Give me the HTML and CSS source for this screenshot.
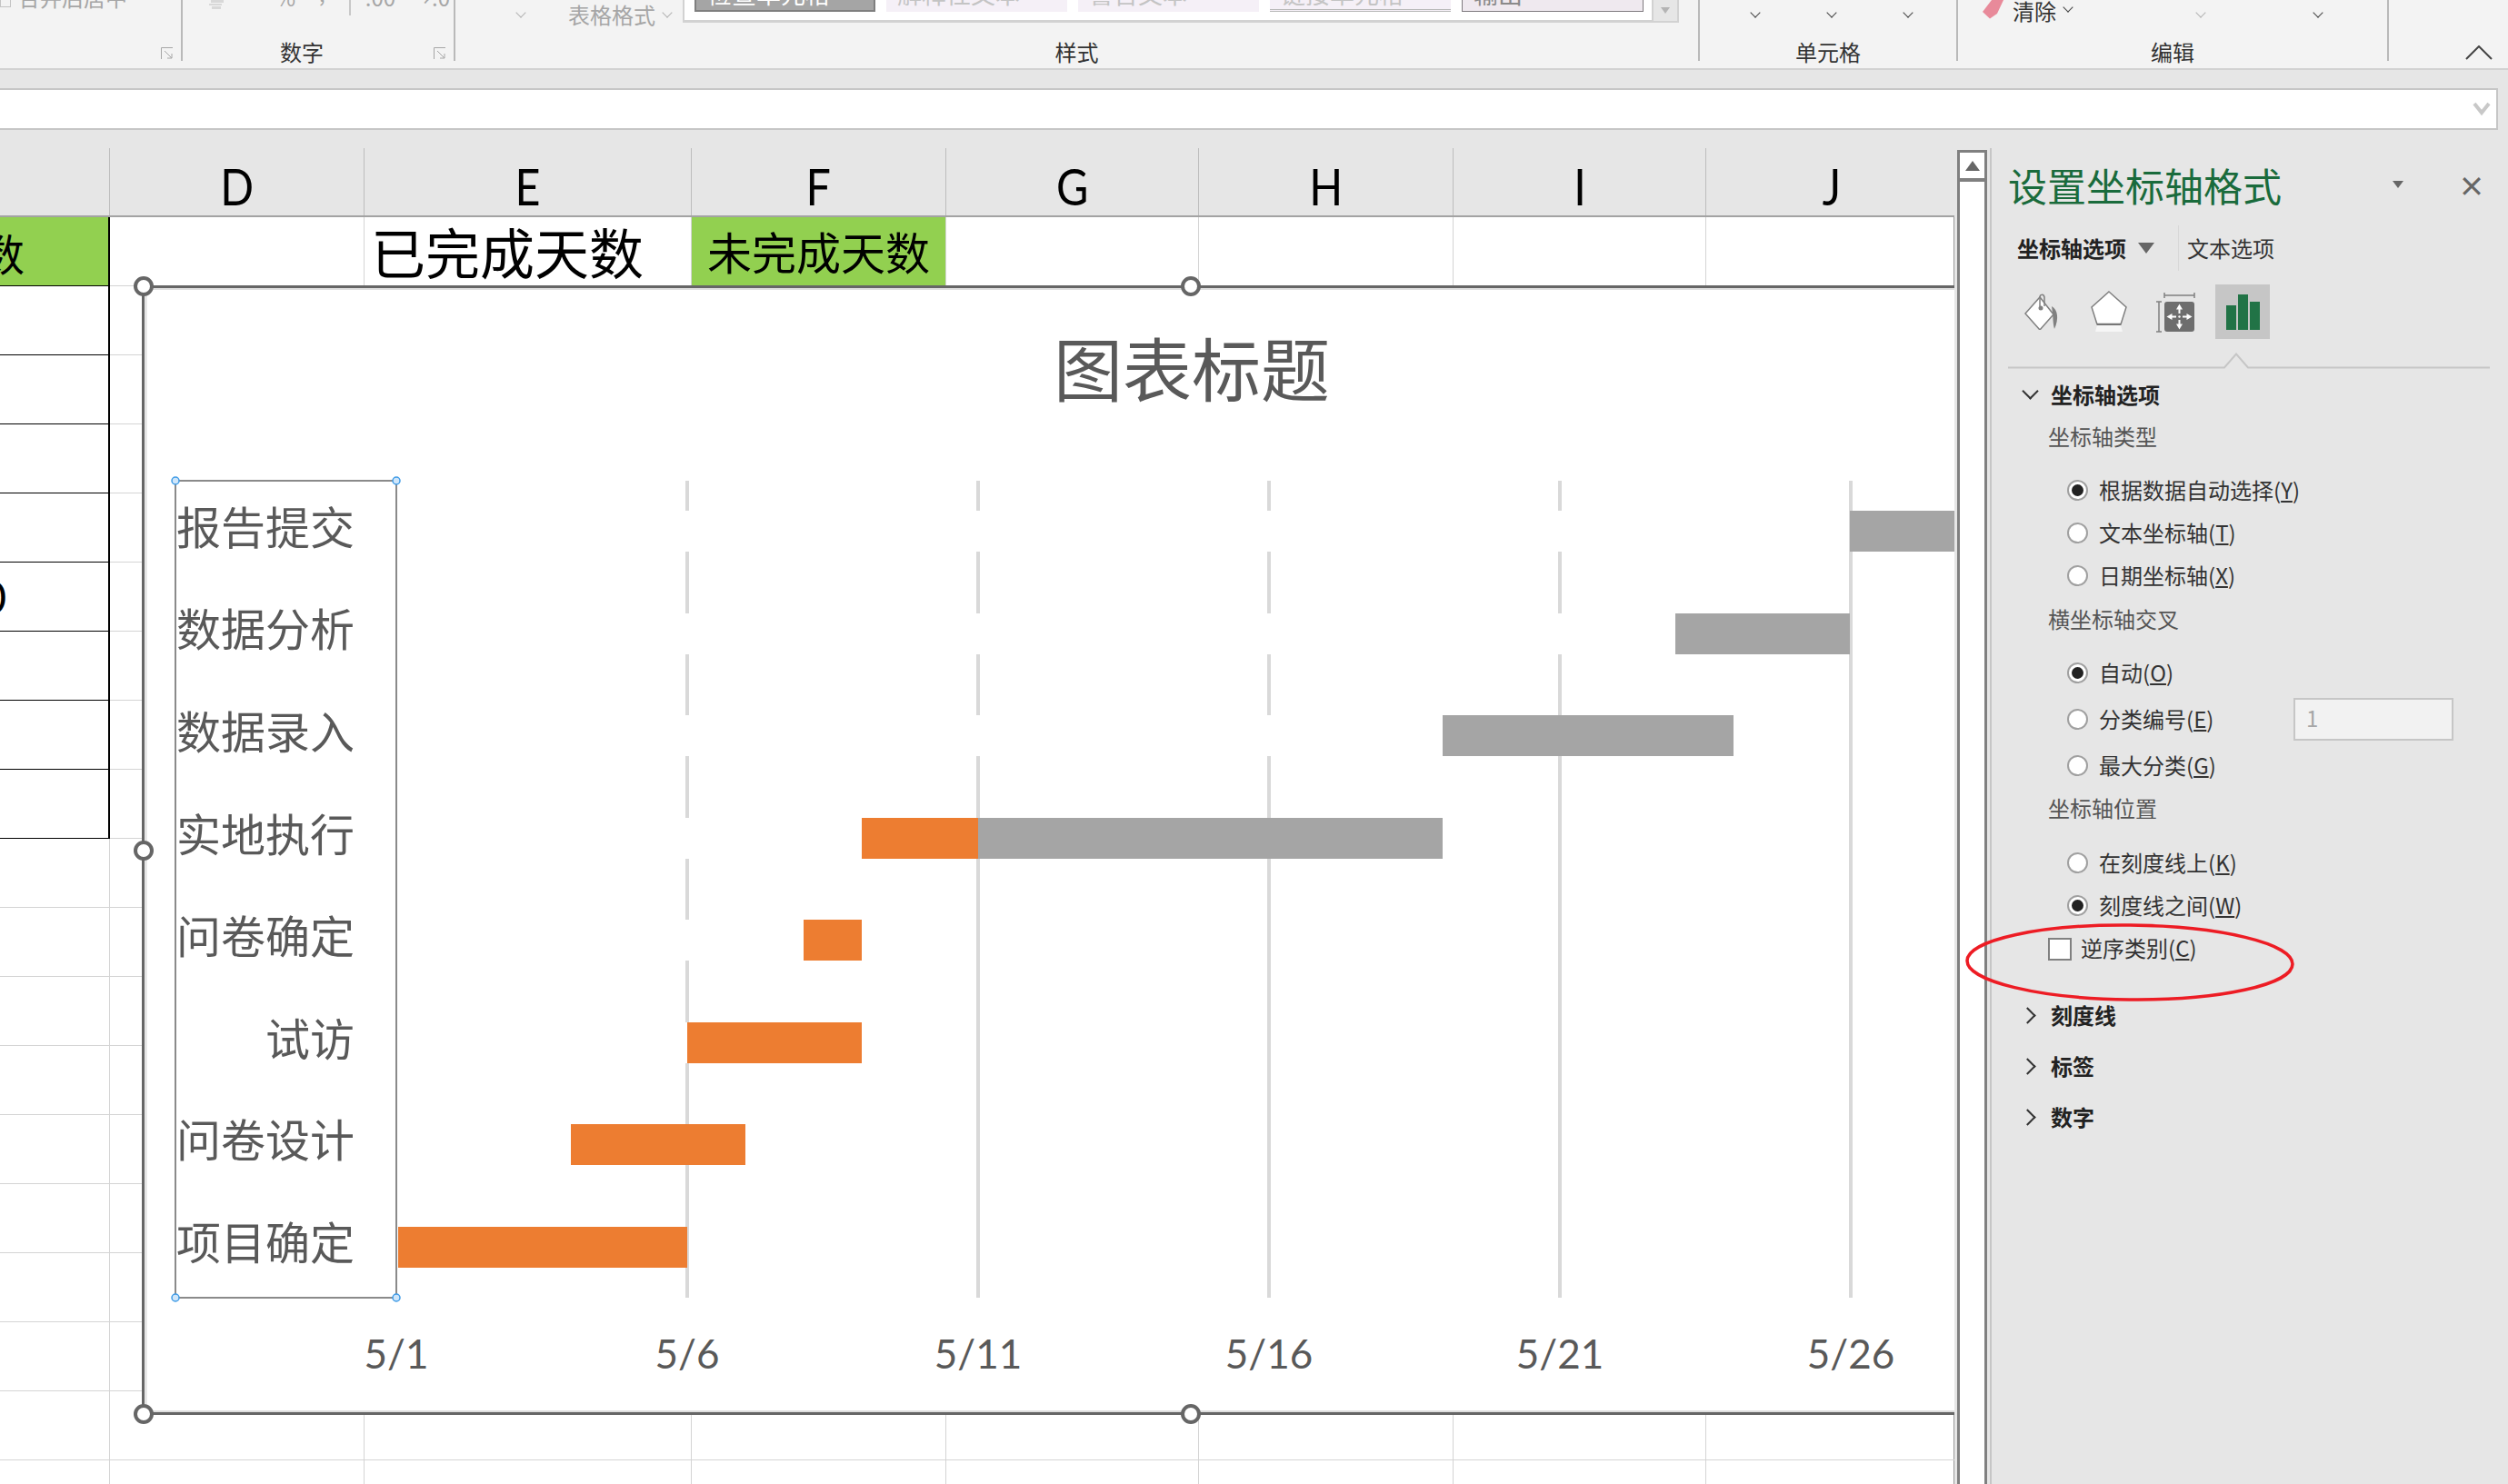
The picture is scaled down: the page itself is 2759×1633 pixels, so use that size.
FILE: index.html
```html
<!DOCTYPE html>
<html lang="zh-CN">
<head>
<meta charset="utf-8">
<title>设置坐标轴格式</title>
<link rel="stylesheet" href="styles.css">
</head>
<body>
<div class="app">
  <header class="ribbon">
    <section class="group g-align">
      <div class="group-top"><i class="merge-icon"></i><span class="clip-text gray merge">合并后居中</span></div>
      <svg class="launcher" viewBox="0 0 14 14"><path d="M.5 13V.5H13M4 4l8 8M12 7v5H7" fill="none" stroke="#a6a6a6"/></svg>
    </section>
    <section class="group g-number">
      <div class="group-top">
        <svg class="coins" width="24" height="10" viewBox="0 0 24 10"><path d="M3 0h14v3H3zM1 4h14v2H1zM4 7h10v3H4z" fill="#d8d8d8"/></svg>
        <span class="clip-text gray pct">%</span>
        <span class="clip-text gray comma">,</span>
        <span class="num-divider"></span>
        <span class="clip-text gray dec">.00</span>
        <span class="clip-text gray dec2">→.0</span>
      </div>
      <div class="group-label number-label">数字</div>
      <svg class="launcher" viewBox="0 0 14 14"><path d="M.5 13V.5H13M4 4l8 8M12 7v5H7" fill="none" stroke="#a6a6a6"/></svg>
    </section>
    <section class="group g-styles">
      <div class="group-top">
        <i class="chev faint s1"></i>
        <span class="table-format">表格格式</span>
        <i class="chev faint s2"></i>
        <div class="gallery">
          <span class="style-cell check"><span class="cut">检查单元格</span></span>
          <span class="style-cell soft"><span class="cut">解释性文本</span></span>
          <span class="style-cell soft"><span class="cut">警告文本</span></span>
          <span class="style-cell soft link"><span class="cut">链接单元格</span></span>
          <span class="style-cell output"><span class="cut">输出</span></span>
        </div>
        <div class="gallery-scroll"><i class="tri-down"></i></div>
      </div>
      <div class="group-label">样式</div>
    </section>
    <section class="group g-cells">
      <div class="group-top"><i class="chev c1"></i><i class="chev c2"></i><i class="chev c2"></i></div>
      <div class="group-label">单元格</div>
    </section>
    <section class="group g-edit">
      <div class="group-top">
        <svg class="eraser" width="24" height="21" viewBox="0 0 24 21"><path d="M23 0L16 15 8 20.500 0 13 10 0z" fill="#e88a9a"/></svg>
        <span class="clear">清除</span>
        <i class="chev e1"></i>
        <i class="chev faint e2"></i>
        <i class="chev e3"></i>
      </div>
      <div class="group-label">编辑</div>
    </section>
    <div class="collapse">
      <svg width="30" height="16" viewBox="0 0 30 16"><path d="M1 15L15 1l14 14" fill="none" stroke="#444" stroke-width="2"/></svg>
    </div>
  </header>

  <div class="formula-band">
    <div class="formula-input">
      <svg width="20" height="16" viewBox="0 0 20 16"><path d="M2 2l8 10 8-10" fill="none" stroke="#c8c8c8" stroke-width="4"/></svg>
    </div>
  </div>

  <main class="main">
    <div class="sheet">
      <div class="cols col-heads">
        <div class="head"></div>
        <div class="head"><span>D</span></div>
        <div class="head"><span>E</span></div>
        <div class="head"><span>F</span></div>
        <div class="head"><span>G</span></div>
        <div class="head"><span>H</span></div>
        <div class="head"><span>I</span></div>
        <div class="head"><span>J</span></div>
      </div>
      <div class="cols sheet-body">
        <div class="col">
          <div class="cell boxed green clipped">总天数</div>
          <div class="cell boxed"></div>
          <div class="cell boxed"></div>
          <div class="cell boxed"></div>
          <div class="cell boxed"></div>
          <div class="cell boxed clipped zero">0</div>
          <div class="cell boxed"></div>
          <div class="cell boxed"></div>
          <div class="cell boxed"></div>
        </div>
        <div class="col"></div>
        <div class="col"><div class="cell done">已完成天数</div></div>
        <div class="col"><div class="cell green todo">未完成天数</div></div>
        <div class="col"></div>
        <div class="col"></div>
        <div class="col"></div>
        <div class="col"></div>
      </div>

      <svg class="chart" width="2010" height="1270" viewBox="140 300 2010 1270">
        <rect x="157.500" y="315.500" width="2400" height="1240" fill="#fff" stroke="#666" stroke-width="3"/>
        <rect x="160.500" y="318" width="2400" height="1235" fill="none" stroke="#dedede" stroke-width="2"/>
        <text class="chart-title" x="1311" y="436" text-anchor="middle">图表标题</text>

        <g class="gridlines">
          <line x1="756" y1="529" x2="756" y2="1428"/>
          <line x1="1076" y1="529" x2="1076" y2="1428"/>
          <line x1="1396" y1="529" x2="1396" y2="1428"/>
          <line x1="1716" y1="529" x2="1716" y2="1428"/>
          <line x1="2036" y1="529" x2="2036" y2="1428"/>
        </g>

        <g fill="#fff">
          <rect x="436" y="562" width="1598" height="45"/>
          <rect x="436" y="675" width="1407" height="45"/>
          <rect x="436" y="787" width="1151" height="45"/>
          <rect x="436" y="900" width="512" height="45"/>
          <rect x="436" y="1012" width="448" height="45"/>
          <rect x="436" y="1125" width="320" height="45"/>
          <rect x="436" y="1237" width="192" height="45"/>
        </g>
        <g fill="#ed7d31">
          <rect x="948" y="900" width="128" height="45"/>
          <rect x="884" y="1012" width="64" height="45"/>
          <rect x="756" y="1125" width="192" height="45"/>
          <rect x="628" y="1237" width="192" height="45"/>
          <rect x="438" y="1350" width="318" height="45"/>
        </g>
        <g fill="#a5a5a5">
          <rect x="2035" y="562" width="128" height="45"/>
          <rect x="1843" y="675" width="192" height="45"/>
          <rect x="1587" y="787" width="320" height="45"/>
          <rect x="1076" y="900" width="511" height="45"/>
        </g>

        <rect x="193" y="529" width="243" height="899" fill="none" stroke="#8a8a8a" stroke-width="2"/>
        <g class="cat-labels" text-anchor="end">
          <text x="390" y="599">报告提交</text>
          <text x="390" y="711">数据分析</text>
          <text x="390" y="824">数据录入</text>
          <text x="390" y="937">实地执行</text>
          <text x="390" y="1049">问卷确定</text>
          <text x="390" y="1162">试访</text>
          <text x="390" y="1273">问卷设计</text>
          <text x="390" y="1386">项目确定</text>
        </g>
        <g class="date-labels" text-anchor="middle">
          <text x="436" y="1506">5/1</text>
          <text x="756" y="1506">5/6</text>
          <text x="1076" y="1506">5/11</text>
          <text x="1396" y="1506">5/16</text>
          <text x="1716" y="1506">5/21</text>
          <text x="2036" y="1506">5/26</text>
        </g>

        <g class="mini-handles">
          <circle cx="193" cy="529" r="4"/><circle cx="436" cy="529" r="4"/>
          <circle cx="193" cy="1428" r="4"/><circle cx="436" cy="1428" r="4"/>
        </g>
        <g class="handles">
          <circle cx="158" cy="315" r="9"/><circle cx="1310" cy="315" r="9"/>
          <circle cx="158" cy="936" r="9"/>
          <circle cx="158" cy="1556" r="9"/><circle cx="1310" cy="1556" r="9"/>
        </g>
      </svg>
    </div>

    <div class="scrollbar">
      <div class="scroll-btn"><i class="tri-up"></i></div>
    </div>

    <aside class="panel">
      <div class="panel-title">
        <h1>设置坐标轴格式</h1>
        <i class="tri-down panel-menu"></i>
        <span class="panel-close">×</span>
      </div>
      <div class="panel-tabs">
        <strong>坐标轴选项</strong>
        <i class="tri-down tab-tri"></i>
        <span class="tab-sep"></span>
        <span>文本选项</span>
      </div>
      <div class="panel-icons">
        <svg class="p-icon bucket" width="40" height="40" viewBox="0 0 40 40">
          <path d="M1 22L17 4l15 19-15 17z" fill="#fff" stroke="#808080" stroke-width="1.500"/>
          <path d="M17 14V4c0-3 4-4 5 0v10" fill="none" stroke="#808080" stroke-width="1.500"/>
          <circle cx="18" cy="16" r="2.500" fill="#808080"/>
          <path d="M30 14c7 4 8 14 3 25-2-8-1-12-3-25z" fill="#808080"/>
        </svg>
        <svg class="p-icon penta" width="40" height="46" viewBox="0 0 40 46">
          <path d="M20 1l19 17-6 19H7L1 18z" fill="#fff" stroke="#808080" stroke-width="1.500"/>
          <path d="M7 37h26" stroke="#777" stroke-width="2.500"/>
          <path d="M7 38h26l2 7H5z" fill="#f6f6f6"/>
        </svg>
        <svg class="p-icon sizer" width="44" height="44" viewBox="0 0 44 44">
          <path d="M9 3h33M9 0v6M42 0v6M3 10v33M0 10h6M0 43h6" fill="none" stroke="#808080" stroke-width="1.500"/>
          <rect x="9" y="10" width="33" height="33" rx="3" fill="#6e6e6e"/>
          <path d="M25.500 12.500l-3.500 6h7zM25.500 40.500l-3.500-6h7zM11.500 26.500l6-3.500v7zM39.500 26.500l-6-3.500v7z" fill="#fff"/>
          <path d="M25.500 18v5M25.500 30v5M17 26.500h5M29 26.500h5" stroke="#fff" stroke-width="2"/>
          <circle cx="25.500" cy="26.500" r="1.200" fill="#fff"/>
        </svg>
        <div class="p-icon active">
          <svg width="37" height="39" viewBox="0 0 37 39"><path d="M0 12h11v27H0zM13 0h11v39H13zM26 8h11v31H26z" fill="#217346"/></svg>
        </div>
      </div>
      <svg class="notch" width="530" height="18" viewBox="0 0 530 18"><path d="M0 16.500h238l13-15 13 15h266" fill="none" stroke="#c6c6c6" stroke-width="2"/></svg>

      <div class="sec-head first"><i class="sec-chev open"></i><b>坐标轴选项</b></div>
      <div class="sub-label h52">坐标轴类型</div>
      <div class="radio-group m9">
        <label class="opt h47"><i class="radio on"></i>根据数据自动选择(<u>Y</u>)</label>
        <label class="opt h47"><i class="radio"></i>文本坐标轴(<u>T</u>)</label>
        <label class="opt h47"><i class="radio"></i>日期坐标轴(<u>X</u>)</label>
      </div>
      <div class="sub-label h50">横坐标轴交叉</div>
      <div class="radio-group m8">
        <label class="opt h51"><i class="radio on"></i>自动(<u>O</u>)</label>
        <label class="opt h51"><i class="radio"></i>分类编号(<u>E</u>)<span class="num-input">1</span></label>
        <label class="opt h51"><i class="radio"></i>最大分类(<u>G</u>)</label>
      </div>
      <div class="sub-label h44">坐标轴位置</div>
      <div class="radio-group m14">
        <label class="opt h47"><i class="radio"></i>在刻度线上(<u>K</u>)</label>
        <label class="opt h47"><i class="radio on"></i>刻度线之间(<u>W</u>)</label>
      </div>
      <label class="check-row"><i class="checkbox"></i>逆序类别(<u>C</u>)</label>
      <div class="sec-head closed gap"><i class="sec-chev"></i><b>刻度线</b></div>
      <div class="sec-head closed"><i class="sec-chev"></i><b>标签</b></div>
      <div class="sec-head closed"><i class="sec-chev"></i><b>数字</b></div>
    </aside>

    <svg class="oval" width="380" height="100" viewBox="0 0 380 100">
      <ellipse cx="188" cy="49" rx="179" ry="41" fill="none" stroke="#ed1c24" stroke-width="3.500" transform="rotate(0.6 188 49)"/>
    </svg>
  </main>
</div>
</body>
</html>
```

FILE: styles.css
```css
* { box-sizing: border-box; }
html, body { margin: 0; padding: 0; }
body {
  width: 2759px;
  height: 1633px;
  overflow: hidden;
  background: #e6e6e6;
  font-family: "Noto Sans CJK SC", "Liberation Sans", sans-serif;
  color: #333;
}
i { display: block; font-style: normal; flex: none; }
.app { display: flex; flex-direction: column; width: 2759px; height: 1633px; }

/* ribbon */
.ribbon {
  display: flex;
  height: 77px;
  flex: none;
  background: #f3f3f3;
  border-bottom: 2px solid #d2d2d2;
  overflow: hidden;
}
.group {
  position: relative;
  height: 67px;
  flex: none;
  border-right: 2px solid #b9b9b9;
  display: flex;
  flex-direction: column;
}
.g-align { width: 201px; }
.g-number { width: 300px; }
.g-styles { width: 1369px; }
.g-cells { width: 284px; }
.g-edit { width: 474px; }
.group-top { display: flex; height: 42px; flex: none; font-size: 24px; line-height: 24px; position: relative; }
.group-label { font-size: 24px; line-height: 30px; text-align: center; color: #333; }
.number-label { padding-right: 36px; }
.gray { color: #a6a6a6; }
.clip-text { margin-top: -15px; height: 24px; white-space: nowrap; flex: none; }
.merge-icon { width: 12px; height: 8px; border: 1.5px solid #c4c4c4; border-top: 0; }
.merge { margin-left: 8px; }
.launcher { position: absolute; right: 8px; top: 52px; width: 14px; height: 14px; }
.coins { margin-left: 28px; flex: none; }
.pct { margin-left: 50px; }
.comma { margin-left: 26px; margin-top: -20px; }
.num-divider { width: 2px; height: 17px; background: #c8c8c8; margin-left: 26px; flex: none; }
.dec { margin-left: 16px; }
.dec2 { margin-left: 16px; }
.chev {
  width: 8px;
  height: 8px;
  border-right: 1.5px solid #444;
  border-bottom: 1.5px solid #444;
  transform: rotate(45deg);
  margin-top: 10px;
}
.chev.faint { border-color: #b4b4b4; }
.s1 { margin-left: 68px; }
.table-format { color: #a6a6a6; margin-left: 48px; margin-top: 4px; width: 97px; white-space: nowrap; }
.s2 { margin-left: 8px; }
.gallery {
  display: flex;
  gap: 12px;
  align-items: flex-start;
  margin-left: 13px;
  width: 1066px;
  height: 25px;
  padding-left: 11px;
  background: #fff;
  border-bottom: 3px solid #d2d2d2;
  border-left: 2px solid #d2d2d2;
}
.style-cell {
  width: 199px;
  height: 13px;
  flex: none;
  overflow: hidden;
  font-size: 27px;
  padding-left: 12px;
  color: #c4c4c4;
  white-space: nowrap;
}
.cut { display: block; line-height: 30px; margin-top: -22px; }
.check { background: #a5a5a5; color: #fff; border: 2px solid #7f7f7f; border-top: 0; }
.soft { background: #f5f0f7; }
.link { background: #f5f0f7; border-bottom: 3px double #b8b8b8; }
.output { background: #efe9ef; color: #8a8a8a; border: 1.5px solid #7f7a7f; border-top: 0; width: 200px; }
.gallery-scroll {
  width: 30px;
  height: 25px;
  flex: none;
  background: #e6e6e6;
  border: 2px solid #d2d2d2;
  border-top: 0;
  display: flex;
  align-items: center;
  justify-content: center;
}
.tri-down { width: 0; height: 0; border-left: 5px solid transparent; border-right: 5px solid transparent; border-top: 7px solid #b4b4b4; }
.c1 { margin-left: 57px; }
.c2 { margin-left: 76px; }
.eraser { margin-left: 27px; flex: none; }
.clear { margin-left: 9px; margin-top: 0; white-space: nowrap; }
.e1 { margin-left: 9px; margin-top: 4px; }
.e2 { margin-left: 138px; }
.e3 { margin-left: 121px; }
.collapse { flex: 1; display: flex; justify-content: flex-end; align-items: flex-end; padding: 0 17px 9px 0; }

/* formula bar */
.formula-band { height: 86px; flex: none; padding: 20px 11px 20px 0; }
.formula-input {
  height: 46px;
  background: #fff;
  border: 2px solid #c6c6c6;
  border-left: 0;
  display: flex;
  align-items: center;
  justify-content: flex-end;
  padding-right: 6px;
}

/* sheet */
.main { position: relative; display: flex; flex: 1; min-height: 0; }
.sheet { position: relative; width: 2150px; flex: none; overflow: hidden; }
.cols { display: grid; grid-template-columns: 121px 280px 360px 280px 278px 280px 278px 278px; }
.col-heads { height: 76px; border-bottom: 2px solid #a3a3a3; }
.head {
  border-right: 1px solid #bdbdbd;
  display: flex;
  align-items: center;
  justify-content: center;
  padding-top: 7px;
  font-family: Lato, "Liberation Sans", sans-serif;
  font-size: 57px;
  line-height: 66px;
  color: #000;
}
.head span { display: block; transform: scaleX(.85); }
.sheet-body { height: 1394px; background: #fff; border-right: 1px solid #999; }
.col {
  border-right: 1px solid #d4d4d4;
  background: repeating-linear-gradient(to bottom, transparent 0, transparent 75px, #d4d4d4 75px, #d4d4d4 76px);
  min-width: 0;
}
.cell { height: 76px; color: #000; white-space: nowrap; }
.boxed { width: calc(100% + 1px); border-right: 2px solid #000; border-bottom: 1px solid #000; background: #fff; }
.green { background: #92d050; }
.clipped { display: flex; justify-content: flex-end; align-items: center; font-size: 48px; padding-right: 92px; }
.zero { font-family: Lato, sans-serif; padding-right: 112px; }
.done { font-size: 60px; line-height: 74px; padding-left: 7px; background: #fff; }
.todo { font-size: 49px; line-height: 74px; text-align: center; }

.chart { position: absolute; left: 140px; top: 137px; display: block; }
.chart text { font-family: "Noto Sans CJK SC", sans-serif; fill: #595959; }
.chart .chart-title { font-size: 76px; }
.gridlines line { stroke: #d9d9d9; stroke-width: 4; }
.cat-labels { font-size: 49px; }
.chart .date-labels text { font-family: Lato, sans-serif; font-size: 44px; }
.handles circle { fill: #fff; stroke: #666; stroke-width: 4; }
.mini-handles circle { fill: #cfe6fa; stroke: #3f9be6; stroke-width: 1.500; }

/* scrollbar */
.scrollbar {
  width: 33px;
  flex: none;
  margin: 2px 0 0 3px;
  background: #fff;
  border: 3px solid #808080;
  border-bottom: 0;
}
.scroll-btn { height: 32px; border-bottom: 4px solid #808080; display: flex; align-items: center; justify-content: center; }
.tri-up { width: 0; height: 0; border-left: 8px solid transparent; border-right: 8px solid transparent; border-bottom: 11px solid #666; }

/* task pane */
.panel {
  width: 570px;
  flex: none;
  margin-left: 3px;
  border-left: 2px solid #c6c6c6;
  padding-left: 18px;
  font-size: 24px;
  line-height: 30px;
  color: #333;
}
.panel-title { display: flex; align-items: center; height: 84px; padding-bottom: 5px; }
.panel-title h1 { margin: 0; font-size: 43px; line-height: 56px; font-weight: 400; color: #1a6b3c; white-space: nowrap; }
.panel-menu { border-top-color: #666; border-left-width: 6px; border-right-width: 6px; border-top-width: 8px; margin-left: 122px; }
.panel-close { width: 30px; margin-left: 60px; font-size: 30px; line-height: 30px; text-align: center; font-weight: 700; color: #666; }
.panel-tabs { display: flex; align-items: center; height: 53px; padding: 0 0 2px 10px; white-space: nowrap; }
.panel-tabs strong { font-weight: 700; color: #222; }
.tab-tri { border-top-color: #666; border-left-width: 9px; border-right-width: 9px; border-top-width: 12px; margin-left: 13px; }
.tab-sep { width: 1px; height: 50px; background: #d8d8d8; margin: 0 9px 0 26px; }
.panel-icons { position: relative; display: flex; align-items: center; height: 60px; margin-top: 13px; padding-left: 18px; }
.p-icon { flex: none; }
.penta { margin-left: 33px; }
.sizer { margin-left: 32px; margin-top: 2px; }
.active { width: 60px; height: 60px; margin-left: 21px; background: #c6c6c6; display: flex; align-items: center; justify-content: center; }
.notch { display: block; margin-top: 15px; }
.sec-head { display: flex; align-items: center; height: 56px; padding: 0 0 2px 12px; white-space: nowrap; }
.sec-head.first { height: 40px; margin-top: 9px; }
.sec-head.gap { margin-top: 22px; }
.sec-head b { font-weight: 700; color: #222; margin-left: 11px; }
.sec-chev { width: 24px; height: 24px; position: relative; }
.sec-chev::after {
  content: "";
  position: absolute;
  left: 3px;
  top: 6px;
  width: 11px;
  height: 11px;
  border-right: 2px solid #333;
  border-bottom: 2px solid #333;
  transform: rotate(-45deg);
}
.sec-chev.open::after { left: 6px; top: 2px; transform: rotate(45deg); }
.sub-label { display: flex; align-items: center; padding: 0 0 2px 44px; color: #555; white-space: nowrap; }
.h52 { height: 52px; }
.h50 { height: 50px; }
.h44 { height: 44px; }
.m9 { margin-top: 9px; }
.m8 { margin-top: 8px; }
.m14 { margin-top: 14px; }
.opt { display: flex; align-items: center; padding: 0 0 2px 65px; white-space: nowrap; }
.h47 { height: 47px; }
.h51 { height: 51px; }
.radio {
  width: 23px;
  height: 23px;
  margin: 2px 12px 0 0;
  border-radius: 50%;
  background: #fff;
  border: 2px solid #a0a0a0;
  position: relative;
}
.radio.on::after {
  content: "";
  position: absolute;
  left: 3px;
  top: 3px;
  width: 13px;
  height: 13px;
  border-radius: 50%;
  background: #222;
}
.num-input {
  width: 176px;
  height: 47px;
  margin: 2px 60px 0 auto;
  padding-left: 12px;
  background: #f2f2f2;
  border: 2px solid #c6c6c6;
  color: #a6a6a6;
  line-height: 40px;
}
.check-row { display: flex; align-items: center; height: 48px; padding: 0 0 2px 44px; white-space: nowrap; }
.checkbox { width: 26px; height: 25px; margin: 2px 10px 0 0; background: #fff; border: 2px solid #808080; }
.oval { position: absolute; left: 2155px; top: 847px; display: block; pointer-events: none; }
```
